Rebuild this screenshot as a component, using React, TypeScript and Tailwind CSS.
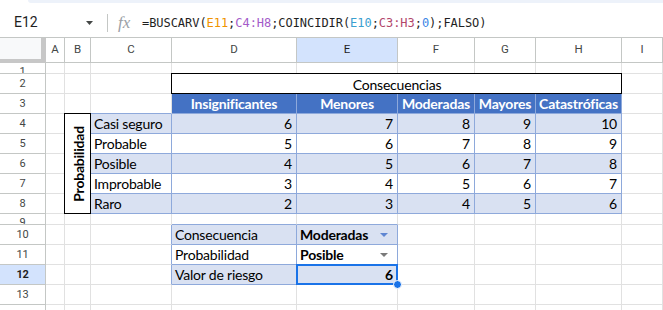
import type { ReactNode } from 'react';

const cols = ['A', 'B', 'C', 'D', 'E', 'F', 'G', 'H', 'I'];
const heads = ['Insignificantes', 'Menores', 'Moderadas', 'Mayores', 'Catastróficas'];
const rows: [string, number[]][] = [
  ['Casi seguro', [6, 7, 8, 9, 10]],
  ['Probable', [5, 6, 7, 8, 9]],
  ['Posible', [4, 5, 6, 7, 8]],
  ['Improbable', [3, 4, 5, 6, 7]],
  ['Raro', [2, 3, 4, 5, 6]],
];

function Cell({ className = '', children }: { className?: string; children?: ReactNode }) {
  return <div className={`border-r border-b overflow-hidden flex items-center whitespace-nowrap ${className}`}>{children}</div>;
}

function RowHead({ n, short, active }: { n: number; short?: boolean; active?: boolean }) {
  return (
    <div
      className={`border-r border-b border-[#c4c7c5] overflow-hidden flex justify-center [font-family:Roboto,sans-serif] text-[11px] leading-[14px] ${
        short ? 'items-start pt-[2px]' : 'items-center'
      } ${active ? 'bg-[#d3e3fd] font-bold text-[#1f1f1f]' : 'bg-white text-[#444746]'}`}
    >
      {n}
    </div>
  );
}

function Arrow({ color }: { color: string }) {
  return (
    <svg width="8" height="4" viewBox="0 0 8 4" className="ml-auto mr-[9px]">
      <path d="M0 0h8L4 4z" fill={color} />
    </svg>
  );
}

const grid = 'border-[#e1e1e1]';
const tb = 'border-[#8ea9db]';

export default function App() {
  return (
    <div className="w-[663px] h-[310px] overflow-hidden bg-white [font-family:Roboto,sans-serif] text-[#1f1f1f]">
      <div className="h-[38px] border-b border-[#c4c7c5] flex flex-col">
        <div className="h-[8px] flex">
          <div className="w-[28px]" />
          <div className="flex-1 h-[3px] rounded-bl-[6px] bg-[#edf2fa]" />
        </div>
        <div className="flex items-center h-[29px]">
          <div className="w-[100px] pl-[14px] pr-[7px] flex items-center justify-between text-[14px]">
            <span>E12</span>
            <svg width="7" height="4" viewBox="0 0 7 4">
              <path d="M0 0h7L3.5 4z" fill="#444746" />
            </svg>
          </div>
          <div className="ml-[7px] w-px h-[18px] bg-[#c4c7c5]" />
          <span className="ml-[10px] w-[24px] [font-family:'Liberation_Serif',serif] italic text-[17px] text-[#9aa0a6] leading-none">fx</span>
          <span className="[font-family:'DejaVu_Sans_Mono',monospace] text-[12px] tracking-[-0.05px] text-[#1f1f1f]">
            =BUSCARV(<span className="text-[#f09300]">E11</span>;<span className="text-[#a45bc9]">C4:H8</span>;COINCIDIR(
            <span className="text-[#3aa0d0]">E10</span>;<span className="text-[#b2466a]">C3:H3</span>;
            <span className="text-[#3b86e6]">0</span>);FALSO)
          </span>
        </div>
      </div>

      <div className="grid grid-cols-[46px_19px_26px_81px_125px_101px_77px_61px_86px_1fr] grid-rows-[25px_11px_20px_20px_20px_20px_20px_20px_20px_11px_20px_20px_20px_20px_20px] [font-family:Lato,sans-serif] text-[14px] tracking-[-0.2px] text-black">
        <div className="bg-[#f8f9fa] border-r-[5px] border-b-[4px] border-[#c7c7c7]" />
        {cols.map((c) => (
          <div
            key={c}
            className={`border-r border-b border-[#c4c7c5] flex items-center justify-center tracking-normal [font-family:Roboto,sans-serif] text-[11.5px] ${
              c === 'E' ? 'bg-[#d3e3fd] text-[#1f1f1f]' : 'bg-white text-[#444746]'
            }`}
          >
            {c}
          </div>
        ))}

        {/* row 1 */}
        <RowHead n={1} short />
        {cols.map((c) => <Cell key={c} className={grid} />)}

        {/* row 2 */}
        <RowHead n={2} />
        <Cell className={grid} />
        <Cell className={grid} />
        <Cell className={grid} />
        <div className="col-span-5 relative flex items-center justify-center pt-px">
          Consecuencias
          <div className="absolute top-[-1px] left-[-1px] right-0 bottom-0 border border-black pointer-events-none" />
        </div>
        <Cell className={grid} />

        {/* row 3 */}
        <RowHead n={3} />
        <Cell className={grid} />
        <Cell className={grid} />
        <Cell className={`${grid} !border-b-[#8ea9db]`} />
        {heads.map((h) => (
          <Cell key={h} className={`${tb} bg-[#4472c4] text-white font-bold justify-center`}>
            {h}
          </Cell>
        ))}
        <Cell className={grid} />

        {/* rows 4-8 */}
        {rows.map(([label, vals], i) => {
          const fill = i % 2 === 0 ? 'bg-[#d9e1f2]' : 'bg-white';
          return [
            <RowHead key={`h${i}`} n={i + 4} />,
            <Cell key={`a${i}`} className={grid} />,
            i === 0 ? (
              <div key="b" className="row-span-5 relative flex items-center justify-center">
                <span className="[writing-mode:vertical-rl] rotate-180 font-bold">Probabilidad</span>
                <div className="absolute top-[-1px] left-[-1px] right-0 bottom-0 border border-black pointer-events-none" />
              </div>
            ) : null,
            <Cell key={`c${i}`} className={`${tb} ${fill} pl-[3px]`}>
              {label}
            </Cell>,
            ...vals.map((v, j) => (
              <Cell key={`v${i}${j}`} className={`${tb} ${fill} justify-end pr-[4px]`}>
                {v}
              </Cell>
            )),
            <Cell key={`i${i}`} className={grid} />,
          ];
        })}

        {/* row 9 */}
        <RowHead n={9} short />
        {cols.map((c) => (
          <Cell key={c} className={c === 'D' || c === 'E' ? `${grid} !border-b-[#8ea9db]` : grid} />
        ))}

        {/* row 10 */}
        <RowHead n={10} />
        <Cell className={grid} />
        <Cell className={grid} />
        <Cell className={`${grid} !border-r-[#8ea9db]`} />
        <Cell className={`${tb} bg-[#d9e1f2] pl-[3px]`}>Consecuencia</Cell>
        <Cell className={`${tb} bg-[#d9e1f2] pl-[3px] font-bold`}>
          Moderadas
          <Arrow color="#5f86d2" />
        </Cell>
        {['F', 'G', 'H', 'I'].map((c) => <Cell key={c} className={grid} />)}

        {/* row 11 */}
        <RowHead n={11} />
        <Cell className={grid} />
        <Cell className={grid} />
        <Cell className={`${grid} !border-r-[#8ea9db]`} />
        <Cell className={`${tb} bg-white pl-[3px]`}>Probabilidad</Cell>
        <Cell className={`${tb} bg-white pl-[3px] font-bold`}>
          Posible
          <Arrow color="#7a7a7a" />
        </Cell>
        {['F', 'G', 'H', 'I'].map((c) => <Cell key={c} className={grid} />)}

        {/* row 12 */}
        <RowHead n={12} active />
        <Cell className={grid} />
        <Cell className={grid} />
        <Cell className={`${grid} !border-r-[#8ea9db]`} />
        <Cell className={`${tb} bg-[#d9e1f2] pl-[3px]`}>Valor de riesgo</Cell>
        <div className={`relative border-r border-b ${tb} bg-[#d9e1f2] flex items-center justify-end pr-[4px] font-bold`}>
          6
          <div className="absolute top-[-1px] left-[-1px] right-[-1px] bottom-[-1px] border-2 border-[#1a73e8] z-10" />
          <div className="absolute right-[-5px] bottom-[-5px] w-[9px] h-[9px] rounded-full bg-[#1a73e8] border border-white z-20" />
        </div>
        {['F', 'G', 'H', 'I'].map((c) => <Cell key={c} className={grid} />)}

        {/* rows 13-14 */}
        {[13, 14].map((n) => [
          <RowHead key={`h${n}`} n={n} />,
          ...cols.map((c) => <Cell key={`${n}${c}`} className={grid} />),
        ])}
      </div>
    </div>
  );
}
